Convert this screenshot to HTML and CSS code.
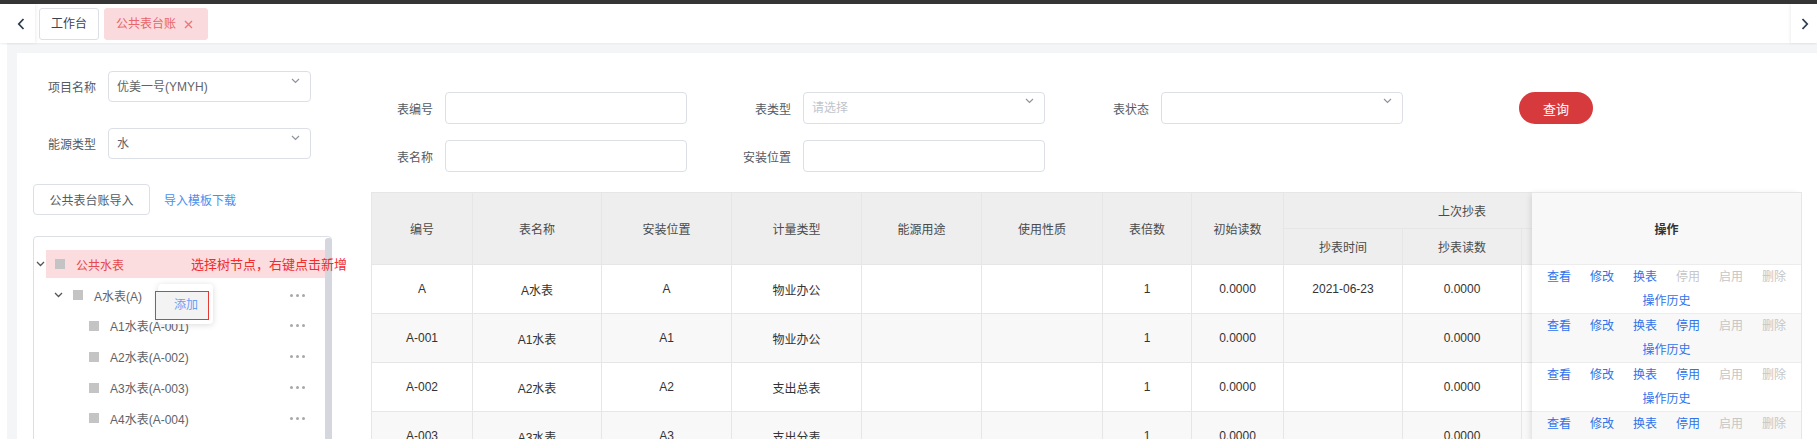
FILE: index.html
```html
<!DOCTYPE html>
<html lang="zh-CN">
<head>
<meta charset="utf-8">
<title>公共表台账</title>
<link rel="stylesheet" href="styles.css">
</head>
<body>
<div class="topbar"></div>
<div class="tabbar">
  <div class="nav nav-left">
    <svg width="8" height="12" viewBox="0 0 8 12"><path d="M6.5 1L1.8 6l4.7 5" fill="none" stroke="#2c3e50" stroke-width="1.8"/></svg>
  </div>
  <div class="tabs">
    <div class="tab">工作台</div>
    <div class="tab active">公共表台账<svg width="9" height="9" viewBox="0 0 9 9"><path d="M1 1l7 7M8 1L1 8" stroke="#e7787c" stroke-width="1.4"/></svg></div>
  </div>
  <div class="nav nav-right">
    <svg width="8" height="12" viewBox="0 0 8 12"><path d="M1.5 1l4.7 5-4.7 5" fill="none" stroke="#2c3e50" stroke-width="1.8"/></svg>
  </div>
</div>

<div class="main">
  <div class="panel">
    <aside class="left">
      <div class="field">
        <label class="flabel">项目名称</label>
        <div class="select">优美一号(YMYH)<svg class="chev" width="9" height="6" viewBox="0 0 9 6"><path d="M1 1l3.5 3.5L8 1" fill="none" stroke="#8f949c" stroke-width="1.2"/></svg></div>
      </div>
      <div class="field">
        <label class="flabel">能源类型</label>
        <div class="select">水<svg class="chev" width="9" height="6" viewBox="0 0 9 6"><path d="M1 1l3.5 3.5L8 1" fill="none" stroke="#8f949c" stroke-width="1.2"/></svg></div>
      </div>
      <div class="actions">
        <button class="btn">公共表台账导入</button>
        <span class="link">导入模板下载</span>
      </div>
      <div class="tree">
        <div class="tnode l0">
          <span class="caret"><svg width="9" height="6" viewBox="0 0 9 6"><path d="M1 1l3.5 3.5L8 1" fill="none" stroke="#555" stroke-width="1.3"/></svg></span>
          <div class="tcontent hl"><span class="sq"></span><span class="tlabel">公共水表</span></div>
        </div>
        <div class="tnode l1">
          <span class="caret"><svg width="9" height="6" viewBox="0 0 9 6"><path d="M1 1l3.5 3.5L8 1" fill="none" stroke="#555" stroke-width="1.3"/></svg></span>
          <div class="tcontent"><span class="sq"></span><span class="tlabel">A水表(A)</span><span class="dots"><i></i><i></i><i></i></span></div>
        </div>
        <div class="tnode l2">
          <span class="caret"></span>
          <div class="tcontent"><span class="sq"></span><span class="tlabel">A1水表(A-001)</span><span class="dots"><i></i><i></i><i></i></span></div>
        </div>
        <div class="tnode l2">
          <span class="caret"></span>
          <div class="tcontent"><span class="sq"></span><span class="tlabel">A2水表(A-002)</span><span class="dots"><i></i><i></i><i></i></span></div>
        </div>
        <div class="tnode l2">
          <span class="caret"></span>
          <div class="tcontent"><span class="sq"></span><span class="tlabel">A3水表(A-003)</span><span class="dots"><i></i><i></i><i></i></span></div>
        </div>
        <div class="tnode l2">
          <span class="caret"></span>
          <div class="tcontent"><span class="sq"></span><span class="tlabel">A4水表(A-004)</span><span class="dots"><i></i><i></i><i></i></span></div>
        </div>
        <div class="scrollbar"></div>
        <div class="note">选择树节点，右键点击新增</div>
        <div class="ctx-box"></div>
        <div class="ctx-item">添加</div>
      </div>
    </aside>

    <section class="right">
      <div class="form-row">
        <label class="lbl first">表编号</label>
        <div class="input"></div>
        <label class="lbl">表类型</label>
        <div class="input placeholder">请选择<svg class="chev2" width="9" height="6" viewBox="0 0 9 6"><path d="M1 1l3.5 3.5L8 1" fill="none" stroke="#8f949c" stroke-width="1.2"/></svg></div>
        <label class="lbl">表状态</label>
        <div class="input"><svg class="chev2" width="9" height="6" viewBox="0 0 9 6"><path d="M1 1l3.5 3.5L8 1" fill="none" stroke="#8f949c" stroke-width="1.2"/></svg></div>
        <span class="lbl"></span>
        <button class="query">查询</button>
      </div>
      <div class="form-row last">
        <label class="lbl first">表名称</label>
        <div class="input"></div>
        <label class="lbl">安装位置</label>
        <div class="input"></div>
      </div>

      <div class="grid">
        <div class="scroll">
          <table>
            <colgroup>
              <col style="width:101px"><col style="width:129px"><col style="width:130px"><col style="width:130px"><col style="width:120px"><col style="width:121px"><col style="width:89px"><col style="width:92px"><col style="width:119px"><col style="width:119px"><col style="width:119px">
            </colgroup>
            <thead>
              <tr class="h1">
                <th rowspan="2">编号</th><th rowspan="2">表名称</th><th rowspan="2">安装位置</th><th rowspan="2">计量类型</th><th rowspan="2">能源用途</th><th rowspan="2">使用性质</th><th rowspan="2">表倍数</th><th rowspan="2">初始读数</th><th colspan="3">上次抄表</th>
              </tr>
              <tr class="h2">
                <th>抄表时间</th><th>抄表读数</th><th></th>
              </tr>
            </thead>
            <tbody>
              <tr><td>A</td><td>A水表</td><td>A</td><td>物业办公</td><td></td><td></td><td>1</td><td>0.0000</td><td>2021-06-23</td><td>0.0000</td><td></td></tr>
              <tr><td>A-001</td><td>A1水表</td><td>A1</td><td>物业办公</td><td></td><td></td><td>1</td><td>0.0000</td><td></td><td>0.0000</td><td></td></tr>
              <tr><td>A-002</td><td>A2水表</td><td>A2</td><td>支出总表</td><td></td><td></td><td>1</td><td>0.0000</td><td></td><td>0.0000</td><td></td></tr>
              <tr><td>A-003</td><td>A3水表</td><td>A3</td><td>支出分表</td><td></td><td></td><td>1</td><td>0.0000</td><td></td><td>0.0000</td><td></td></tr>
            </tbody>
          </table>
        </div>
        <div class="ops">
          <div class="ops-head">操作</div>
          <div class="ops-row">
            <div><a class="on">查看</a><a class="on">修改</a><a class="on">换表</a><a class="off">停用</a><a class="off">启用</a><a class="off">删除</a></div>
            <div><a class="on">操作历史</a></div>
          </div>
          <div class="ops-row alt">
            <div><a class="on">查看</a><a class="on">修改</a><a class="on">换表</a><a class="on">停用</a><a class="off">启用</a><a class="off">删除</a></div>
            <div><a class="on">操作历史</a></div>
          </div>
          <div class="ops-row">
            <div><a class="on">查看</a><a class="on">修改</a><a class="on">换表</a><a class="on">停用</a><a class="off">启用</a><a class="off">删除</a></div>
            <div><a class="on">操作历史</a></div>
          </div>
          <div class="ops-row alt">
            <div><a class="on">查看</a><a class="on">修改</a><a class="on">换表</a><a class="on">停用</a><a class="off">启用</a><a class="off">删除</a></div>
            <div><a class="on">操作历史</a></div>
          </div>
        </div>
      </div>
    </section>
  </div>
</div>
</body>
</html>
```

FILE: styles.css
```css
* { box-sizing: border-box; margin: 0; padding: 0; }
html, body { width: 1817px; height: 439px; overflow: hidden; }
body {
  font-family: "Liberation Sans", "Noto Sans CJK SC", sans-serif;
  font-size: 12px;
  color: #606266;
  background: #fff;
}

.topbar { height: 4px; background: #353535; }

.tabbar {
  height: 39px;
  display: flex;
  background: #fff;
  position: relative;
  z-index: 2;
  box-shadow: 0 1px 2px rgba(0, 0, 0, 0.05);
}
.nav { display: flex; align-items: center; background: #fff; }
.nav-left { width: 35px; padding-left: 17px; box-shadow: 1px 0 3px rgba(0, 0, 0, 0.07); }
.nav-right { width: 26px; padding-left: 10px; box-shadow: -1px 0 3px rgba(0, 0, 0, 0.07); }
.tabs { flex: 1; display: flex; gap: 5px; padding: 4px 0 0 4px; }
.tab {
  height: 32px;
  line-height: 30px;
  border: 1px solid #dcdfe6;
  border-radius: 3px;
  padding: 0 11px;
  color: #3b4350;
  background: #fff;
}
.tab.active {
  display: flex;
  align-items: center;
  gap: 8px;
  background: #fbdadd;
  border-color: #fbdadd;
  color: #e8656a;
  padding: 0 14px 0 11px;
}

.main {
  margin-left: 7px;
  height: 396px;
  padding: 10px 0 0 10px;
  background: #f4f5f7;
}
.panel { height: 100%; background: #fff; display: flex; }

/* left column */
.left { width: 326px; flex: none; padding: 18px 11px 0 16px; }
.field { display: flex; align-items: center; height: 31px; margin-bottom: 26px; }
.flabel { width: 75px; text-align: right; padding-right: 12px; color: #555a62; }
.select {
  position: relative;
  width: 203px;
  height: 31px;
  border: 1px solid #dcdfe6;
  border-radius: 4px;
  padding: 1px 8px 0;
  line-height: 29px;
  color: #5f6368;
}
.chev { position: absolute; right: 10px; top: 6px; }

.actions { display: flex; align-items: center; gap: 14px; margin-top: -1px; }
.btn {
  width: 117px;
  height: 31px;
  border: 1px solid #dcdfe6;
  border-radius: 4px;
  background: #fff;
  font: inherit;
  color: #555a62;
}
.link { color: #4a90ee; }

.tree {
  position: relative;
  margin-top: 21px;
  width: 299px;
  height: 260px;
  border: 1px solid #dcdfe6;
  border-radius: 4px;
  padding-top: 12px;
}
.tnode { display: flex; align-items: center; height: 30.8px; }
.tnode.l0 { padding-left: 2px; }
.tnode.l1 { padding-left: 20px; }
.tnode.l2 { padding-left: 36px; }
.caret { width: 10px; flex: none; display: flex; align-items: center; }
.tcontent {
  flex: 1;
  height: 28px;
  display: flex;
  align-items: center;
  padding: 0 20px 0 9px;
  margin-right: 6px;
}
.tcontent.hl { background: #fbdcdf; }
.sq { width: 10px; height: 10px; background: #c4c4c4; margin-right: 11px; flex: none; }
.tlabel { color: #5f6368; }
.hl .tlabel { color: #e5484d; }
.dots { margin-left: auto; display: flex; gap: 3px; }
.dots i { width: 3px; height: 3px; border-radius: 50%; background: #a8a8a8; display: block; }

.scrollbar {
  position: absolute;
  right: -1px;
  top: 1px;
  width: 7px;
  height: 300px;
  background: #d6d6de;
  border-radius: 3px 3px 0 0;
}
.note {
  position: absolute;
  left: 157px;
  top: 20px;
  font-size: 13px;
  line-height: 16px;
  color: #f22b2b;
  white-space: nowrap;
  z-index: 2;
}
.ctx-box {
  position: absolute;
  left: 124px;
  top: 47px;
  width: 55px;
  height: 40px;
  background: #fff;
  border-radius: 4px;
  box-shadow: 0 1px 6px rgba(0, 0, 0, 0.15);
}
.ctx-item {
  position: absolute;
  left: 121px;
  top: 54px;
  width: 54px;
  height: 29px;
  border: 1px solid #e53935;
  background: #f3f3f3;
  color: #6a9ef2;
  line-height: 27px;
  padding-left: 18px;
}

/* right column */
.right { flex: 1; padding: 39px 0 0 28px; min-width: 0; }
.form-row { display: flex; align-items: center; height: 32px; margin-bottom: 16px; }
.form-row.last { margin-bottom: 20px; }
.lbl { width: 116px; text-align: right; padding-right: 12px; color: #555a62; flex: none; }
.lbl.first { width: 74px; }
.input {
  position: relative;
  width: 242px;
  height: 32px;
  border: 1px solid #dcdfe6;
  border-radius: 4px;
  flex: none;
}
.input.placeholder { color: #c0c4cc; padding-left: 8px; line-height: 30px; }
.chev2 { position: absolute; right: 10px; top: 5px; }
.query {
  width: 74px;
  height: 32px;
  border: none;
  border-radius: 16px;
  background: #d63a3c;
  color: #fff;
  font: inherit;
  font-size: 13px;
}

.grid { display: flex; width: 1431px; }
.scroll { width: 1161px; overflow: hidden; flex: none; }
table {
  width: 1269px;
  table-layout: fixed;
  border-collapse: collapse;
  color: #333;
}
th, td {
  border: 1px solid #e6e6e6;
  text-align: center;
  vertical-align: middle;
  font-weight: normal;
  white-space: nowrap;
}
th { background: #eeeeee; color: #4a4a4a; }
tr.h1, tr.h2 { height: 36px; }
tbody tr { height: 49px; }
tbody tr:nth-child(even) td { background: #f8f8f8; }

.ops {
  width: 270px;
  flex: none;
  border-top: 1px solid #e6e6e6;
  border-right: 1px solid #e6e6e6;
  box-shadow: -3px 0 6px -2px rgba(0, 0, 0, 0.12);
  position: relative;
  z-index: 1;
  background: #fff;
}
.ops-head {
  height: 72px;
  background: #f8f8f8;
  border-bottom: 1px solid #ececec;
  display: flex;
  align-items: center;
  justify-content: center;
  font-weight: bold;
  color: #333;
}
.ops-row {
  height: 49px;
  border-bottom: 1px solid #ececec;
  text-align: center;
  line-height: 24px;
}
.ops-row.alt { background: #f8f8f8; }
.ops-row a { display: inline-block; padding: 0 9.5px; }
.ops-row a.on { color: #2f72ea; }
.ops-row a.off { color: #c6c6c6; }
```
